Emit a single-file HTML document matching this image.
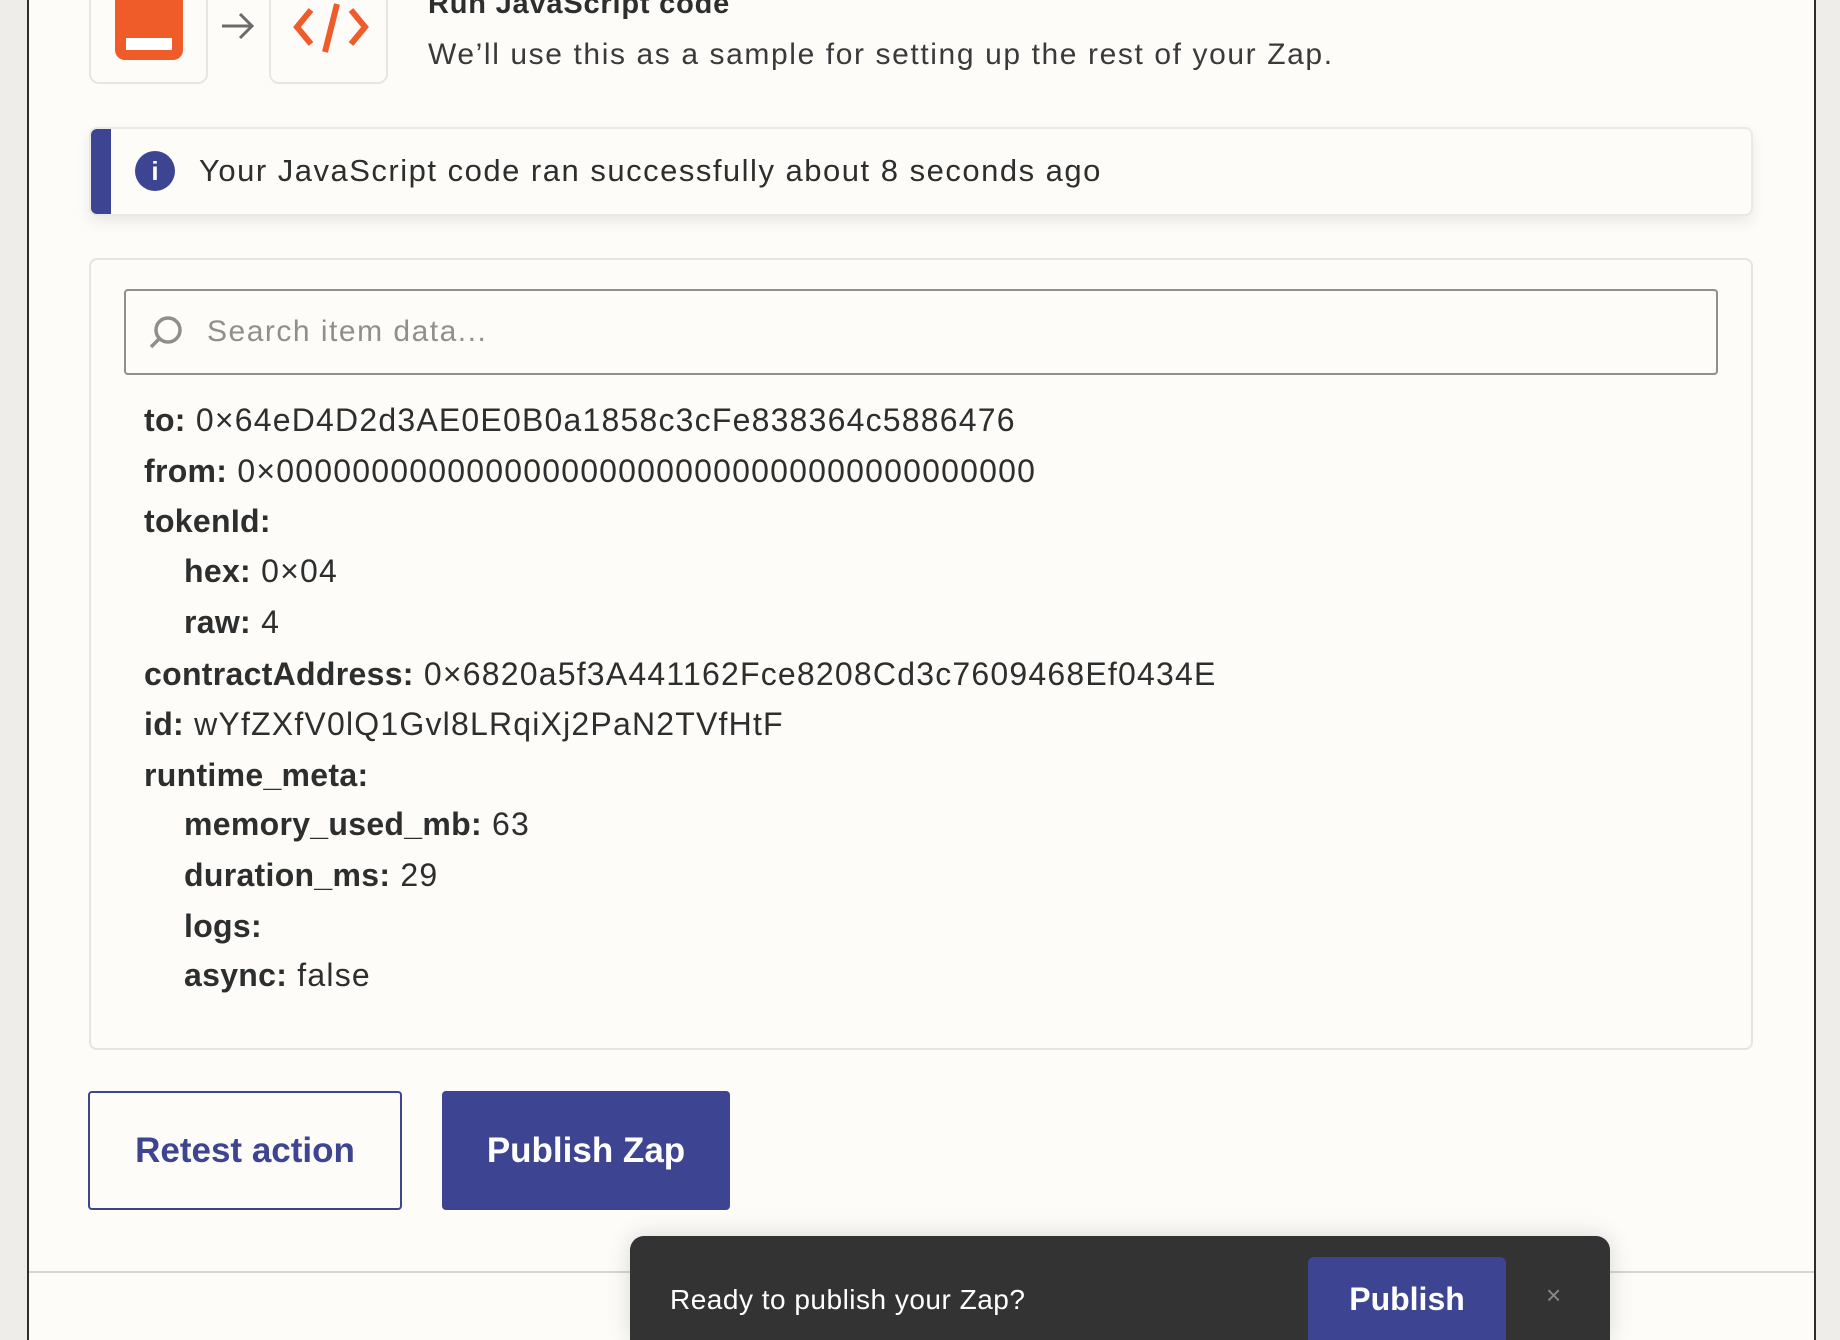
<!DOCTYPE html>
<html><head><meta charset="utf-8"><style>
*{margin:0;padding:0;box-sizing:border-box}
html,body{width:1840px;height:1340px;overflow:hidden}
body{background:#efede9;font-family:"Liberation Sans",sans-serif;color:#2d2e2e;position:relative}
.page{position:absolute;left:27px;top:0;width:1789px;height:1340px;background:#fdfcf9;border-left:2px solid #2d2e2e;border-right:2px solid #2d2e2e}
.a{position:absolute}
.ib{position:absolute;top:-20px;width:119px;height:104px;border:2px solid #e8e6e2;border-radius:10px;background:#fdfcf9}
.line{position:absolute;font-size:32px;letter-spacing:1.2px;white-space:nowrap;line-height:36px}
.line b{font-weight:700;letter-spacing:0.3px}
</style></head><body>
<div class="page"></div>
<div class="ib" style="left:89px"><div class="a" style="left:24px;top:0;width:68px;height:78px;background:#f05b2a;border-radius:0 0 10px 10px"></div><div class="a" style="left:35px;top:56px;width:46px;height:12px;background:#fff"></div></div>
<svg class="a" style="left:220px;top:10px" width="36" height="32" viewBox="0 0 36 32"><path d="M2 16 H32 M20 4 L32 16 L20 28" stroke="#6b6b6b" stroke-width="3" fill="none"/></svg>
<div class="ib" style="left:269px"><svg class="a" style="left:18px;top:18px" width="84" height="56" viewBox="0 0 84 56"><path d="M22 10 L8 27 L22 44 M62 10 L76 27 L62 44 M48 4 L36 52" stroke="#f05b2a" stroke-width="6" fill="none"/></svg></div>
<div class="a" style="left:428px;top:-12px;font-size:29px;font-weight:700;letter-spacing:0.8px">Run JavaScript code</div>
<div class="a" style="left:428px;top:38px;font-size:30px;letter-spacing:1.6px;color:#3a3a3a">We’ll use this as a sample for setting up the rest of your Zap.</div>
<div class="a" style="left:89px;top:127px;width:1664px;height:89px;border:2px solid #ebe9e5;border-radius:8px;background:#fdfcf9;box-shadow:0 6px 14px rgba(0,0,0,.08);overflow:hidden">
<div class="a" style="left:0;top:0;width:20px;height:100%;background:#3d4592"></div>
<div class="a" style="left:44px;top:22px;width:40px;height:40px;border-radius:50%;background:#3d4592;color:#fff;font-weight:700;font-size:26px;text-align:center;line-height:40px">i</div>
<div class="a" style="left:108px;top:24px;font-size:31px;letter-spacing:1.5px;color:#2d2e2e">Your JavaScript code ran successfully about 8 seconds ago</div>
</div>
<div class="a" style="left:89px;top:258px;width:1664px;height:792px;border:2px solid #e6e4e2;border-radius:8px"></div>
<div class="a" style="left:124px;top:289px;width:1594px;height:86px;border:2px solid #8f8f8b;border-radius:4px">
<svg class="a" style="left:20px;top:22px" width="40" height="40" viewBox="0 0 40 40"><circle cx="22" cy="17" r="12" stroke="#8f8f8b" stroke-width="3.5" fill="none"/><path d="M13 26 L5 34" stroke="#8f8f8b" stroke-width="3.5"/></svg>
<div class="a" style="left:81px;top:24px;font-size:30px;letter-spacing:1.5px;color:#8f8f8b">Search item data...</div>
</div>
<div class="line" style="left:144px;top:402px"><b>to:</b> 0×64eD4D2d3AE0E0B0a1858c3cFe838364c5886476</div>
<div class="line" style="left:144px;top:453px"><b>from:</b> 0×0000000000000000000000000000000000000000</div>
<div class="line" style="left:144px;top:503px"><b>tokenId:</b></div>
<div class="line" style="left:184px;top:553px"><b>hex:</b> 0×04</div>
<div class="line" style="left:184px;top:604px"><b>raw:</b> 4</div>
<div class="line" style="left:144px;top:656px"><b>contractAddress:</b> 0×6820a5f3A441162Fce8208Cd3c7609468Ef0434E</div>
<div class="line" style="left:144px;top:706px"><b>id:</b> wYfZXfV0lQ1Gvl8LRqiXj2PaN2TVfHtF</div>
<div class="line" style="left:144px;top:757px"><b>runtime_meta:</b></div>
<div class="line" style="left:184px;top:806px"><b>memory_used_mb:</b> 63</div>
<div class="line" style="left:184px;top:857px"><b>duration_ms:</b> 29</div>
<div class="line" style="left:184px;top:908px"><b>logs:</b></div>
<div class="line" style="left:184px;top:957px"><b>async:</b> false</div>
<div class="a" style="left:88px;top:1091px;width:314px;height:119px;border:2px solid #3d4592;border-radius:4px;color:#3d4592;font-weight:700;font-size:35px;text-align:center;line-height:115px">Retest action</div>
<div class="a" style="left:442px;top:1091px;width:288px;height:119px;background:#3d4592;border-radius:4px;color:#fff;font-weight:700;font-size:35px;text-align:center;line-height:119px">Publish Zap</div>
<div class="a" style="left:29px;top:1271px;width:1785px;height:2px;background:#d8d6d2"></div>
<div class="a" style="left:630px;top:1236px;width:980px;height:104px;background:#333;border-radius:14px 14px 0 0;box-shadow:0 0 24px rgba(0,0,0,.15);overflow:hidden">
<div class="a" style="left:40px;top:48px;font-size:28px;letter-spacing:0.5px;color:#fff">Ready to publish your Zap?</div>
<div class="a" style="left:678px;top:21px;width:198px;height:90px;background:#3d4592;border-radius:6px 6px 0 0;color:#fff;font-weight:700;font-size:32px;text-align:center;line-height:84px">Publish</div>
<div class="a" style="left:916px;top:44px;font-size:26px;color:#888">×</div>
</div>
</body></html>
